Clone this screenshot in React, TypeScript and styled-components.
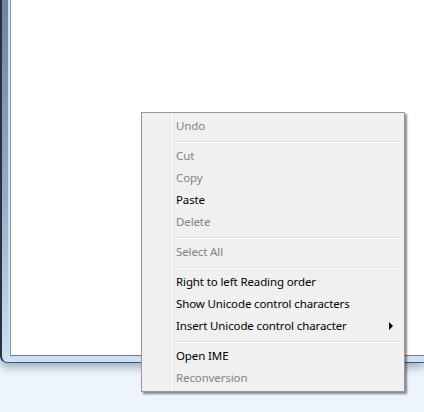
import React from "react";
import styled, { createGlobalStyle } from "styled-components";

const Global = createGlobalStyle`
  html, body { margin: 0; padding: 0; overflow: hidden; }
  body {
    width: 424px;
    height: 412px;
    background: #edf4fc;
    font-family: "Noto Sans", "Open Sans", sans-serif;
  }
`;

const Screen = styled.div`
  position: relative;
  width: 424px;
  height: 412px;
`;

const Window = styled.div`
  width: 100%;
  height: 363px;
  box-sizing: border-box;
  border-left: 2px solid #24333f;
  border-bottom: 1px solid #2f5c78;
  border-bottom-left-radius: 7px;
  padding: 0 0 6px 6px;
  background: linear-gradient(to bottom, #6f849a 0%, #98adc3 55%, #cfe1f6 100%);
  box-shadow: 0 5px 9px rgba(40, 60, 80, 0.35);
`;

const Glass = styled.div`
  height: 100%;
  box-sizing: border-box;
  border-left: 1px solid #c9d9ea;
  background: #d3e4f7;
  padding-left: 1px;
`;

const Content = styled.div`
  height: 100%;
  box-sizing: border-box;
  background: #ffffff;
  border-left: 1px solid #8c99a6;
  border-bottom: 1px solid #6f7c88;
`;

const Menu = styled.div`
  position: absolute;
  left: 141px;
  top: 112px;
  width: 264px;
  box-sizing: border-box;
  border: 1px solid #979797;
  padding: 2px;
  background-color: #f0f0f0;
  background-image: linear-gradient(
    to right,
    transparent 28px,
    #e2e3e3 28px,
    #e2e3e3 29px,
    #ffffff 29px,
    #ffffff 30px,
    transparent 30px
  );
  box-shadow: 2px 2px 2px rgba(0, 0, 0, 0.45);
  font-size: 11.5px;
  letter-spacing: -0.12px;
  display: flex;
  flex-direction: column;
`;

const Item = styled.div<{ $disabled?: boolean }>`
  height: 22px;
  line-height: 22px;
  padding-left: 32px;
  padding-right: 9px;
  display: flex;
  align-items: center;
  justify-content: space-between;
  color: ${(p) => (p.$disabled ? "#838383" : "#000000")};
  white-space: nowrap;
`;

const Separator = styled.div`
  height: 8px;
  box-sizing: border-box;
  margin-left: 30px;
  margin-right: 1px;
  padding-top: 4px;
  &::before {
    content: "";
    display: block;
    height: 1px;
    background: #e0e0e0;
    border-bottom: 1px solid #ffffff;
  }
`;

const Arrow = styled.span`
  width: 0;
  height: 0;
  border-left: 4px solid #000000;
  border-top: 4px solid transparent;
  border-bottom: 4px solid transparent;
`;

export default function App() {
  return (
    <Screen>
      <Global />
      <Window>
        <Glass>
          <Content />
        </Glass>
      </Window>
      <Menu>
        <Item $disabled>Undo</Item>
        <Separator />
        <Item $disabled>Cut</Item>
        <Item $disabled>Copy</Item>
        <Item>Paste</Item>
        <Item $disabled>Delete</Item>
        <Separator />
        <Item $disabled>Select All</Item>
        <Separator />
        <Item>Right to left Reading order</Item>
        <Item>Show Unicode control characters</Item>
        <Item>
          Insert Unicode control character
          <Arrow />
        </Item>
        <Separator />
        <Item>Open IME</Item>
        <Item $disabled>Reconversion</Item>
      </Menu>
    </Screen>
  );
}
